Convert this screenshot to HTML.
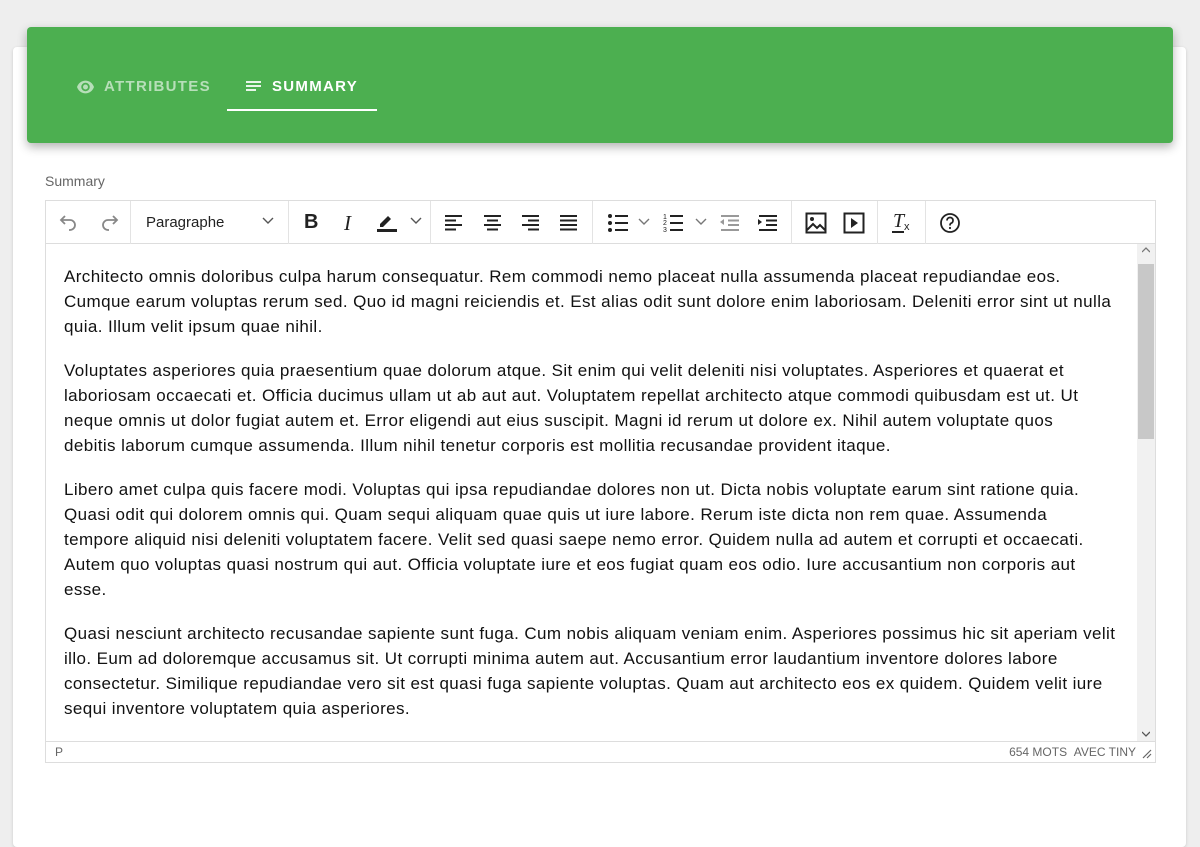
<!DOCTYPE html>
<html><head><meta charset="utf-8"><style>
*{box-sizing:border-box;margin:0;padding:0}
body{width:1200px;height:800px;background:#eeeeee;font-family:"Liberation Sans",sans-serif;overflow:hidden;position:relative}
.card{position:absolute;left:13px;top:47px;width:1173px;height:800px;background:#fff;border-radius:4px;box-shadow:0 1px 3px rgba(0,0,0,.15)}
.hdr{position:absolute;left:27px;top:27px;width:1146px;height:116px;background:#4caf50;border-radius:4px;box-shadow:0 4px 10px rgba(0,0,0,.3)}
.tab{position:absolute;top:78px;font-size:15px;font-weight:bold;letter-spacing:1.3px;color:#fff}
.tab.off{color:rgba(255,255,255,.6)}
.ul{position:absolute;left:227px;top:109px;width:150px;height:2px;background:#fff}
.lbl{position:absolute;left:45px;top:173px;font-size:14px;color:#666}
.ed{position:absolute;left:45px;top:200px;width:1111px;height:563px;border:1px solid #ddd}
.tb{position:absolute;left:0;top:0;width:1109px;height:43px;border-bottom:1px solid #ddd}
.sep{position:absolute;top:0;width:1px;height:43px;background:#e3e3e3}
.ic{position:absolute;top:11px}
.content{position:absolute;left:18px;top:20px;width:1080px;font-size:17px;letter-spacing:0.4px;line-height:25px;color:#111;white-space:nowrap}
.content p{margin-bottom:19px}
.sb{position:absolute;left:1091px;top:43px;width:18px;height:497px;background:#f1f1f1}
.thumb{position:absolute;left:1px;top:20px;width:16px;height:175px;background:#c8c8c8}
.st{position:absolute;left:0;top:540px;width:1109px;height:21px;border-top:1px solid #ddd;font-size:12px;color:#666}
</style></head><body>
<div class="card"></div>
<div class="hdr"></div>
<svg style="position:absolute;left:77px;top:80px" width="17" height="14" viewBox="0 0 24 18"><path fill="rgba(255,255,255,.6)" d="M12 0C6.5 0 2 3.5 0 9c2 5.5 6.5 9 12 9s10-3.5 12-9C22 3.5 17.5 0 12 0zm0 15a6 6 0 1 1 0-12 6 6 0 0 1 0 12zm0-9.5a3.5 3.5 0 1 0 0 7 3.5 3.5 0 0 0 0-7z"/></svg>
<div class="tab off" style="left:104px">ATTRIBUTES</div>
<svg style="position:absolute;left:246px;top:81px" width="16" height="12"><path d="M0 1h15M0 5h15M0 9h10" stroke="#fff" stroke-width="1.7"/></svg>
<div class="tab" style="left:272px">SUMMARY</div>
<div class="ul"></div>
<div class="lbl">Summary</div>
<div class="ed">
 <div class="tb">
  <svg class="ic" style="left:12px" width="22" height="20" viewBox="0 0 22 20"><path d="M7 4L3 8l4 4M3 8h9a5 5 0 0 1 0 10h-1" fill="none" stroke="#888" stroke-width="1.8"/></svg>
  <svg class="ic" style="left:52px" width="22" height="20" viewBox="0 0 22 20"><path d="M15 4l4 4-4 4M19 8h-9a5 5 0 0 0 0 10h1" fill="none" stroke="#888" stroke-width="1.8"/></svg>
  <div class="sep" style="left:84px"></div>
  <div style="position:absolute;left:100px;top:13px;font-size:15px;color:#222">Paragraphe</div>
  <svg class="ic" style="left:216px;top:16px" width="12" height="8"><path d="M1 1l5 5 5-5" fill="none" stroke="#555" stroke-width="1.4"/></svg>
  <div class="sep" style="left:242px"></div>
  <div style="position:absolute;left:258px;top:10px;font-size:20px;font-weight:bold;color:#222">B</div>
  <div style="position:absolute;left:298px;top:10px;font-size:21px;font-style:italic;font-family:'Liberation Serif',serif;color:#222">I</div>
  <svg class="ic" style="left:330px;top:10px" width="22" height="22"><path d="M4 13l8-8 3 3-8 8H4z" fill="#222"/><rect x="1" y="18" width="20" height="3" fill="#222"/></svg>
  <svg class="ic" style="left:364px;top:16px" width="12" height="8"><path d="M1 1l5 5 5-5" fill="none" stroke="#555" stroke-width="1.4"/></svg>
  <div class="sep" style="left:384px"></div>
  <svg class="ic" style="left:398px;top:14px" width="20" height="16"><path d="M1 1h17M1 5.5h11M1 10h17M1 14.5h11" stroke="#222" stroke-width="2"/></svg>
  <svg class="ic" style="left:437px;top:14px" width="20" height="16"><path d="M1 1h17M4 5.5h11M1 10h17M4 14.5h11" stroke="#222" stroke-width="2"/></svg>
  <svg class="ic" style="left:475px;top:14px" width="20" height="16"><path d="M1 1h17M7 5.5h11M1 10h17M7 14.5h11" stroke="#222" stroke-width="2"/></svg>
  <svg class="ic" style="left:513px;top:14px" width="20" height="16"><path d="M1 1h17M1 5.5h17M1 10h17M1 14.5h17" stroke="#222" stroke-width="2"/></svg>
  <div class="sep" style="left:546px"></div>
  <svg class="ic" style="left:561px;top:13px" width="22" height="18"><circle cx="3" cy="2" r="2" fill="#222"/><circle cx="3" cy="9" r="2" fill="#222"/><circle cx="3" cy="16" r="2" fill="#222"/><path d="M8 2h13M8 9h13M8 16h13" stroke="#222" stroke-width="2"/></svg>
  <svg class="ic" style="left:592px;top:17px" width="12" height="8"><path d="M1 1l5 5 5-5" fill="none" stroke="#777" stroke-width="1.4"/></svg>
  <svg class="ic" style="left:617px;top:12px" width="22" height="20"><text x="0" y="6" font-size="7" fill="#222">1</text><text x="0" y="12" font-size="7" fill="#222">2</text><text x="0" y="19" font-size="7" fill="#222">3</text><path d="M7 3h13M7 10h13M7 17h13" stroke="#222" stroke-width="2"/></svg>
  <svg class="ic" style="left:649px;top:17px" width="12" height="8"><path d="M1 1l5 5 5-5" fill="none" stroke="#777" stroke-width="1.4"/></svg>
  <svg class="ic" style="left:673px;top:14px" width="22" height="17"><path d="M1 7l4-3v6z" fill="#999"/><path d="M2 1h18M9 5.5h11M9 10h11M2 15h18" stroke="#999" stroke-width="2"/></svg>
  <svg class="ic" style="left:711px;top:14px" width="22" height="17"><path d="M5 7L1 4v6z" fill="#222"/><path d="M2 1h18M9 5.5h11M9 10h11M2 15h18" stroke="#222" stroke-width="2"/></svg>
  <div class="sep" style="left:745px"></div>
  <svg class="ic" style="left:759px;top:11px" width="22" height="22"><rect x="1.5" y="1.5" width="19" height="19" fill="none" stroke="#222" stroke-width="2"/><circle cx="7" cy="7" r="2" fill="#222"/><path d="M2 18l6-6 4 4 3-3 5 5" fill="none" stroke="#222" stroke-width="2"/></svg>
  <svg class="ic" style="left:797px;top:11px" width="22" height="22"><rect x="1.5" y="1.5" width="19" height="19" fill="none" stroke="#222" stroke-width="2"/><path d="M8 6v10l7-5z" fill="#222"/></svg>
  <div class="sep" style="left:831px"></div>
  <div style="position:absolute;left:847px;top:9px;font-size:20px;font-style:italic;font-family:'Liberation Serif',serif;color:#222">T</div>
  <div style="position:absolute;left:846px;top:30px;width:12px;height:2px;background:#222"></div>
  <div style="position:absolute;left:858px;top:20px;font-size:11px;color:#222">x</div>
  <div class="sep" style="left:879px"></div>
  <svg class="ic" style="left:893px;top:11px" width="22" height="22"><circle cx="11" cy="11" r="9" fill="none" stroke="#222" stroke-width="1.8"/><path d="M8 8.5a3 3 0 1 1 4 2.8c-1 .4-1 1-1 2.2" fill="none" stroke="#222" stroke-width="1.8"/><circle cx="11" cy="16" r="1.1" fill="#222"/></svg>
 </div>
 <div style="position:absolute;left:0;top:43px;width:1091px;height:497px;overflow:hidden">
 <div class="content">
 <p>Architecto omnis doloribus culpa harum consequatur. Rem commodi nemo placeat nulla assumenda placeat repudiandae eos.<br>Cumque earum voluptas rerum sed. Quo id magni reiciendis et. Est alias odit sunt dolore enim laboriosam. Deleniti error sint ut nulla<br>quia. Illum velit ipsum quae nihil.</p>
 <p>Voluptates asperiores quia praesentium quae dolorum atque. Sit enim qui velit deleniti nisi voluptates. Asperiores et quaerat et<br>laboriosam occaecati et. Officia ducimus ullam ut ab aut aut. Voluptatem repellat architecto atque commodi quibusdam est ut. Ut<br>neque omnis ut dolor fugiat autem et. Error eligendi aut eius suscipit. Magni id rerum ut dolore ex. Nihil autem voluptate quos<br>debitis laborum cumque assumenda. Illum nihil tenetur corporis est mollitia recusandae provident itaque.</p>
 <p>Libero amet culpa quis facere modi. Voluptas qui ipsa repudiandae dolores non ut. Dicta nobis voluptate earum sint ratione quia.<br>Quasi odit qui dolorem omnis qui. Quam sequi aliquam quae quis ut iure labore. Rerum iste dicta non rem quae. Assumenda<br>tempore aliquid nisi deleniti voluptatem facere. Velit sed quasi saepe nemo error. Quidem nulla ad autem et corrupti et occaecati.<br>Autem quo voluptas quasi nostrum qui aut. Officia voluptate iure et eos fugiat quam eos odio. Iure accusantium non corporis aut<br>esse.</p>
 <p>Quasi nesciunt architecto recusandae sapiente sunt fuga. Cum nobis aliquam veniam enim. Asperiores possimus hic sit aperiam velit<br>illo. Eum ad doloremque accusamus sit. Ut corrupti minima autem aut. Accusantium error laudantium inventore dolores labore<br>consectetur. Similique repudiandae vero sit est quasi fuga sapiente voluptas. Quam aut architecto eos ex quidem. Quidem velit iure<br>sequi inventore voluptatem quia asperiores.</p>
 </div></div>
 <div class="sb"><div class="thumb"></div>
  <svg style="position:absolute;left:5px;top:3px" width="8" height="6"><path d="M0 5l4-4 4 4" fill="none" stroke="#777" stroke-width="1.3"/></svg>
  <svg style="position:absolute;left:5px;top:487px" width="8" height="6"><path d="M0 1l4 4 4-4" fill="none" stroke="#555" stroke-width="1.3"/></svg>
 </div>
 <div class="st">
  <div style="position:absolute;left:9px;top:3px">P</div>
  <div style="position:absolute;right:19px;top:3px">654 MOTS&nbsp;&nbsp;AVEC TINY</div>
  <svg style="position:absolute;right:3px;top:7px" width="10" height="10"><path d="M1 9l8-8M5 9l4-4" stroke="#666" stroke-width="1.2"/></svg>
 </div>
</div>
</body></html>
